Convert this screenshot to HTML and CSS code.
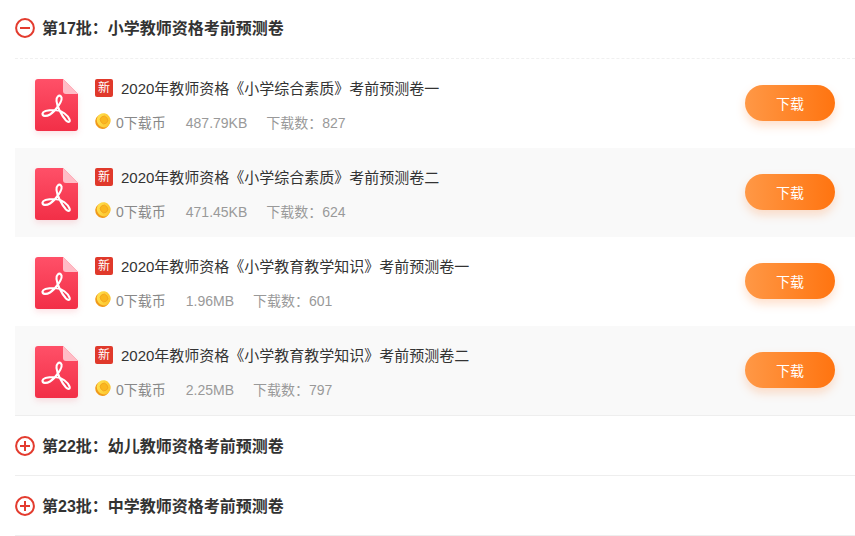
FILE: index.html
```html
<!DOCTYPE html>
<html lang="zh-CN">
<head>
<meta charset="utf-8">
<title>考前预测卷</title>
<link rel="stylesheet" href="styles.css">
</head>
<body>
<svg class="defs" width="0" height="0" aria-hidden="true">
  <defs>
    <linearGradient id="pdfg" x1="0" y1="0" x2="0" y2="1">
      <stop offset="0" stop-color="#ff5068"/>
      <stop offset="1" stop-color="#f22f47"/>
    </linearGradient>
    <linearGradient id="coing" x1="0.2" y1="0.1" x2="0.8" y2="0.9">
      <stop offset="0" stop-color="#ffe04e"/>
      <stop offset="1" stop-color="#fcc22c"/>
    </linearGradient>
    <symbol id="pdf" viewBox="0 0 43 52">
      <path d="M3 0H28L43 15V49a3 3 0 0 1-3 3H3a3 3 0 0 1-3-3V3a3 3 0 0 1 3-3Z" fill="url(#pdfg)"/>
      <path d="M28 0L43 15H31a3 3 0 0 1-3-3Z" fill="#ffbcc6"/>
      <path d="M26 17.500C24 15.500 21 18 21.500 22C22 27 26 36 31 41.500C33.500 44 35.500 43 34.500 40.500C33 36.500 27 31 20 31C14 31 8 31.500 7.500 34.500C7.300 37.500 11.500 37.500 15 35.500C20 32.500 29 21 26 17.500Z" fill="none" stroke="#fff" stroke-width="2.100" stroke-linejoin="round"/>
    </symbol>
    <symbol id="coin" viewBox="0 0 16 16">
      <ellipse cx="7.300" cy="8.700" rx="6.900" ry="7.300" transform="rotate(-35 7.300 8.700)" fill="#f09a1a"/>
      <ellipse cx="8.700" cy="7.300" rx="6.800" ry="7.200" transform="rotate(-35 8.700 7.300)" fill="url(#coing)"/>
      <ellipse cx="9" cy="7" rx="3.600" ry="3.900" transform="rotate(-35 9 7)" fill="#fab71e" stroke="#f3a41f" stroke-width="0.800"/>
    </symbol>
  </defs>
</svg>
<main class="list">
  <section class="batch batch-open">
    <h2 class="batch-head">
      <svg class="toggle" viewBox="0 0 20 20"><circle cx="10" cy="10" r="8.900"/><path d="M5 10H15"/></svg>
      <span class="batch-title">第17批：小学教师资格考前预测卷</span>
    </h2>
    <ul class="rows">
      <li class="row">
        <svg class="pdf"><use href="#pdf"/></svg>
        <div class="info">
          <p class="name"><span class="badge">新</span>2020年教师资格《小学综合素质》考前预测卷一</p>
          <p class="meta"><svg class="coin"><use href="#coin"/></svg><span class="price">0下载币</span><span class="size">487.79KB</span><span>下载数：827</span></p>
        </div>
        <a class="btn">下载</a>
      </li>
      <li class="row">
        <svg class="pdf"><use href="#pdf"/></svg>
        <div class="info">
          <p class="name"><span class="badge">新</span>2020年教师资格《小学综合素质》考前预测卷二</p>
          <p class="meta"><svg class="coin"><use href="#coin"/></svg><span class="price">0下载币</span><span class="size">471.45KB</span><span>下载数：624</span></p>
        </div>
        <a class="btn">下载</a>
      </li>
      <li class="row">
        <svg class="pdf"><use href="#pdf"/></svg>
        <div class="info">
          <p class="name"><span class="badge">新</span>2020年教师资格《小学教育教学知识》考前预测卷一</p>
          <p class="meta"><svg class="coin"><use href="#coin"/></svg><span class="price">0下载币</span><span class="size">1.96MB</span><span>下载数：601</span></p>
        </div>
        <a class="btn">下载</a>
      </li>
      <li class="row">
        <svg class="pdf"><use href="#pdf"/></svg>
        <div class="info">
          <p class="name"><span class="badge">新</span>2020年教师资格《小学教育教学知识》考前预测卷二</p>
          <p class="meta"><svg class="coin"><use href="#coin"/></svg><span class="price">0下载币</span><span class="size">2.25MB</span><span>下载数：797</span></p>
        </div>
        <a class="btn">下载</a>
      </li>
    </ul>
  </section>
  <section class="batch">
    <h2 class="batch-head">
      <svg class="toggle" viewBox="0 0 20 20"><circle cx="10" cy="10" r="8.900"/><path d="M5 10H15M10 5V15"/></svg>
      <span class="batch-title">第22批：幼儿教师资格考前预测卷</span>
    </h2>
  </section>
  <section class="batch">
    <h2 class="batch-head">
      <svg class="toggle" viewBox="0 0 20 20"><circle cx="10" cy="10" r="8.900"/><path d="M5 10H15M10 5V15"/></svg>
      <span class="batch-title">第23批：中学教师资格考前预测卷</span>
    </h2>
  </section>
</main>
</body>
</html>
```
FILE: styles.css
```css
* { box-sizing: border-box; }
html, body { margin: 0; padding: 0; background: #fff; }
body {
  font-family: "Liberation Sans", "Noto Sans CJK SC", sans-serif;
  color: #333;
  overflow: hidden;
}
.defs { display: block; width: 0; height: 0; }
p, h2, ul { margin: 0; padding: 0; }
ul { list-style: none; }
.list { margin-left: 15px; width: 840px; }
.batch { border-bottom: 1px solid #eee; height: 60px; }
.batch-open { height: auto; }
.batch-head {
  height: 59px;
  display: flex;
  align-items: center;
  gap: 7px;
  font-size: 16px;
  font-weight: 700;
  color: #333;
  padding-top: 1px;
}
.batch-title { padding-bottom: 2px; }
.batch-open .batch-head { border-bottom: 1px dashed #f0f0f0; padding-top: 0; padding-bottom: 2px; }
.toggle { width: 20px; height: 20px; flex: none; fill: none; stroke: #e33b2e; stroke-width: 2; }
.row {
  height: 89px;
  display: flex;
  align-items: flex-start;
  padding: 20px 20px 0 20px;
}
.row:nth-child(even) { background: #f9f9f9; }
.pdf {
  width: 43px;
  height: 52px;
  flex: none;
  margin-right: 17px;
  filter: drop-shadow(0 3px 3px rgba(242, 47, 71, .14));
}
.info { flex: 1; min-width: 0; }
.name {
  display: flex;
  align-items: flex-start;
  height: 18px;
  font-size: 15px;
  line-height: 20px;
  color: #333;
}
.badge {
  width: 18px;
  height: 18px;
  margin-right: 8px;
  flex: none;
  background: #e0392b;
  border-radius: 2px;
  color: #fff;
  font-size: 12px;
  line-height: 18px;
  text-align: center;
}
.meta {
  display: flex;
  align-items: center;
  height: 20px;
  margin-top: 16px;
  font-size: 14px;
  line-height: 20px;
  color: #999;
}
.coin { width: 16px; height: 16px; flex: none; margin-right: 5px; margin-top: -5px; }
.price { color: #888; margin-right: 20px; }
.size { margin-right: 19px; }
.btn {
  flex: none;
  width: 90px;
  height: 36px;
  margin-top: 6px;
  border-radius: 18px;
  background: linear-gradient(90deg, #ff9846, #ff7410);
  box-shadow: 0 5px 10px rgba(255, 130, 50, .25);
  color: #fff;
  font-size: 14px;
  line-height: 38px;
  text-align: center;
}
```
